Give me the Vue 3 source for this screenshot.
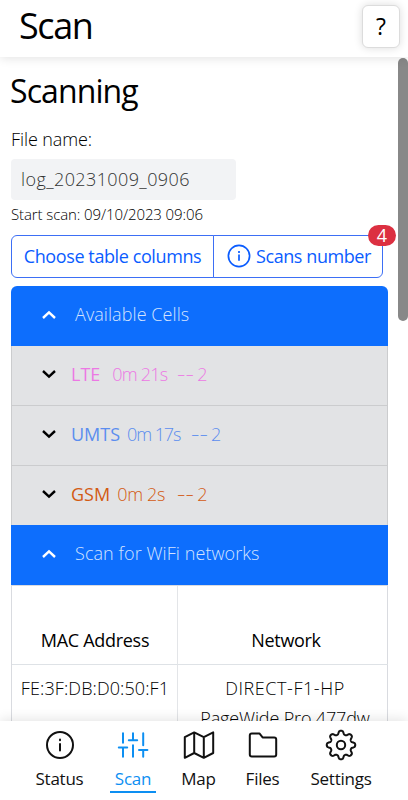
<script setup>
const cells = [
  { name: 'LTE', time: '0m 21s', count: '2', kind: 'lte' },
  { name: 'UMTS', time: '0m 17s', count: '2', kind: 'umts' },
  { name: 'GSM', time: '0m 2s', count: '2', kind: 'gsm' },
]

// Outline of an eight-toothed cog with rounded teeth
const gear = 'M' + Array.from({ length: 192 }, (_, i) => {
  const a = (i / 192) * Math.PI * 2
  const r = 12.5 + 1.75 * Math.tanh(1.5 * Math.cos(8 * a)) / Math.tanh(1.5)
  return `${(16 + r * Math.sin(a)).toFixed(2)} ${(16 - r * Math.cos(a)).toFixed(2)}`
}).join('L') + 'Z'
</script>

<template>
  <div class="app">
    <header class="topbar">
      <h1>Scan</h1>
      <button class="help">?</button>
    </header>

    <main class="content">
      <h2>Scanning</h2>
      <label class="label">File name:</label>
      <div class="file"><span>log_20231009_0906</span></div>
      <p class="start">Start scan: 09/10/2023 09:06</p>

      <div class="buttons">
        <button class="btn columns">Choose table columns</button>
        <button class="btn scans">
          <svg width="24" height="24" viewBox="0 0 24 24" fill="none" stroke="currentColor" stroke-width="1.7">
            <circle cx="12" cy="12" r="10.6" />
            <path d="M12 10.5v6.3M12 7v2" />
          </svg>
          <span>Scans number</span>
          <span class="badge">4</span>
        </button>
      </div>

      <section class="accordion">
        <div class="bar first">
          <svg class="chev" viewBox="0 0 16 10"><path d="M2 8l6-5.6L14 8" /></svg>
          <span>Available Cells</span>
        </div>
        <div v-for="c in cells" :key="c.name" class="cell" :class="c.kind">
          <svg class="chev" viewBox="0 0 16 10"><path d="M2 2l6 5.6L14 2" /></svg>
          <span class="name">{{ c.name }}</span>
          <span class="time">{{ c.time }}</span>
          <span class="dash">--</span>
          <span>{{ c.count }}</span>
        </div>
        <div class="bar">
          <svg class="chev" viewBox="0 0 16 10"><path d="M2 8l6-5.6L14 8" /></svg>
          <span>Scan for WiFi networks</span>
        </div>
        <div class="table">
          <div class="th">MAC Address</div>
          <div class="th net">Network</div>
          <div class="td mac">FE:3F:DB:D0:50:F1</div>
          <div class="td ap"><span class="ssid">DIRECT-F1-HP</span><br />PageWide Pro 477dw</div>
        </div>
      </section>
      <div class="scrollbar"></div>
    </main>

    <nav class="nav">
      <a class="status">
        <svg viewBox="0 0 32 32">
          <circle cx="16" cy="16" r="13" />
          <path d="M16 15v6.4M16 10.4v.8" />
        </svg>
        <span>Status</span>
      </a>
      <a class="scan">
        <svg viewBox="0 0 32 32">
          <path d="M6 4.3v9.4M1.8 18.6h8.4M6 18.6v9.2M16 4.3v6.9M11.8 11.2h8.4M16 16.2v11.6M26.2 4.3v11.9M22 21h8.4M26.2 21v6.8" />
        </svg>
        <span>Scan</span>
      </a>
      <a class="map">
        <svg viewBox="0 0 32 32">
          <path d="M1.8 8.2 11.2 3.4 20.8 8.2 30.2 3.4V24L20.8 28.8 11.2 24 1.8 28.8ZM11.2 3.4V24M20.8 8.2V28.8" />
        </svg>
        <span>Map</span>
      </a>
      <a class="files">
        <svg viewBox="0 0 32 32">
          <path d="M4.8 4.4h7.6l3.2 4h11.6q2 0 2 2v15.2q0 2-2 2H4.8q-2 0-2-2V6.4q0-2 2-2Z" />
        </svg>
        <span>Files</span>
      </a>
      <a class="settings">
        <svg viewBox="0 0 32 32">
          <circle cx="16" cy="16" r="4.2" />
          <path :d="gear" />
        </svg>
        <span>Settings</span>
      </a>
    </nav>
  </div>
</template>

<style>
body { margin: 0; background: #fff; }
</style>

<style scoped>
.app {
  width: 408px; height: 800px; display: flex; flex-direction: column; overflow: hidden;
  background: #fff; color: #000; font-family: "Open Sans", "Noto Sans", sans-serif;
  font-size: 18px; font-weight: 300; white-space: nowrap;
}
.app * { box-sizing: border-box; }
h1, h2, p { margin: 0; font-weight: 400; }
button { font: inherit; background: #fff; margin: 0; padding: 0; }
.topbar {
  height: 57px; flex: none; display: flex; justify-content: space-between; align-items: flex-start;
  padding: 5px 8px 0 19px; box-shadow: 0 1px 10px rgba(0, 0, 0, .12); position: relative; z-index: 2; background: #fff;
}
h1 { font-size: 36px; line-height: 42px; letter-spacing: -1.4px; }
.help {
  width: 38px; height: 43px; border: 1px solid #dcdcdc; border-radius: 6px; color: #000;
  font-size: 23px; font-weight: 500; line-height: 39px; box-shadow: 0 0 8px rgba(0, 0, 0, .14);
}
.content { flex: 1; min-height: 0; overflow: hidden; padding: 14px 20px 0 11px; position: relative; }
h2 { font-size: 32px; line-height: 40px; letter-spacing: -.9px; margin-left: -1px; }
.label { display: block; line-height: 24px; margin-top: 16px; letter-spacing: -.1px; }
.file {
  width: 225px; height: 41px; margin-top: 8px; padding-left: 10px; border-radius: 4px;
  background: #f2f3f5; color: #333; line-height: 41px; letter-spacing: .4px;
}
.start { font-size: 15px; line-height: 20px; margin-top: 4px; font-weight: 300; letter-spacing: -.1px; }
.buttons { display: flex; width: 372px; height: 43px; margin-top: 11px; }
.btn { border: 1px solid #3d6ff5; color: #0a5cff; font-weight: 400; line-height: 39px; position: relative; }
.columns { width: 203px; border-radius: 6px 0 0 6px; letter-spacing: -.4px; }
.scans {
  width: 170px; margin-left: -1px; border-radius: 0 6px 6px 0; letter-spacing: -.42px;
  display: flex; align-items: center; gap: 5px; padding-left: 13px;
}
.badge {
  position: absolute; top: -11px; right: -14px; width: 28px; height: 21px; border-radius: 11px;
  background: #dc3041; color: #fff; line-height: 20px; text-align: center; letter-spacing: 0;
}
.scans > span, .scans > svg { margin-top: -1px; }
.scans > .badge { margin-top: 0; }
.accordion { width: 377px; margin-top: 8px; }
.bar {
  height: 60px; display: flex; align-items: center; padding-left: 30px; background: #0d6efd;
  color: #d4e3ff; letter-spacing: .07px;
}
.first { border-radius: 6px 6px 0 0; }
.bar span { margin-left: 18px; margin-top: -5px; }
.chev { width: 16px; height: 10px; flex: none; fill: none; stroke: #000; stroke-width: 2.4; margin-top: -3px; }
.bar .chev { stroke: #fff; }
.cell {
  height: 60px; display: flex; align-items: center; padding-left: 29px; background: #e2e3e5;
  border: solid #cbccce; border-width: 0 1px 1px;
}
.cell span { margin-top: -4px; }
.gsm { border-bottom: 0; height: 59px; }
.name { font-weight: 400; margin-left: 14px; }
.lte { color: #ec78e4; }
.umts { color: #5b8def; }
.gsm { color: #d35a12; }
.lte .time { margin-left: 12px; width: 65px; letter-spacing: -.8px; }
.umts .time { margin-left: 7px; width: 64px; letter-spacing: -1.1px; }
.gsm .time { margin-left: 7px; width: 60px; letter-spacing: -.3px; }
.dash { width: 13px; margin-right: 7px; transform: scaleX(1.45); transform-origin: 0 50%; }
.table {
  display: grid; grid-template-columns: 166px 210px; border: solid #d9dbe0; border-width: 1px 1px 0;
  text-align: center; line-height: 30px;
}
.th { height: 79px; padding-top: 39px; font-weight: 400; border-bottom: 1px solid #dee2e6; letter-spacing: -.3px; }
.td { height: 90px; padding-top: 8px; }
.th:nth-child(odd), .td:nth-child(odd) { border-right: 1px solid #e3e5e8; padding-left: 1px; }
.net { padding-left: 6px; }
.mac { letter-spacing: .1px; }
.ap { padding-left: 4px; letter-spacing: -.15px; }
.ssid { letter-spacing: .55px; }
.scrollbar {
  position: absolute; top: 1px; right: 0; width: 10px; height: 263px; border-radius: 5px; background: #888;
}
.nav {
  flex: none; height: 79px; display: flex; justify-content: space-between; padding: 8px 31px 0 30px;
  background: #fff; box-shadow: 0 -1px 12px rgba(0, 0, 0, .12); position: relative; z-index: 2;
  font-size: 17px; font-weight: 400; letter-spacing: -.25px;
}
.nav a { display: flex; flex-direction: column; align-items: center; height: 64px; color: #111; }
.nav svg { width: 32px; height: 32px; fill: none; stroke: currentColor; stroke-width: 2; stroke-linejoin: round; stroke-linecap: round; }
.nav span { line-height: 24px; margin-top: 6px; }
.status { width: 59px; }
.scan { width: 46px; }
.nav .scan { color: #0d8ff2; border-bottom: 2px solid #0d8ff2; }
.map, .files { width: 43px; }
.settings { width: 72px; }
</style>
